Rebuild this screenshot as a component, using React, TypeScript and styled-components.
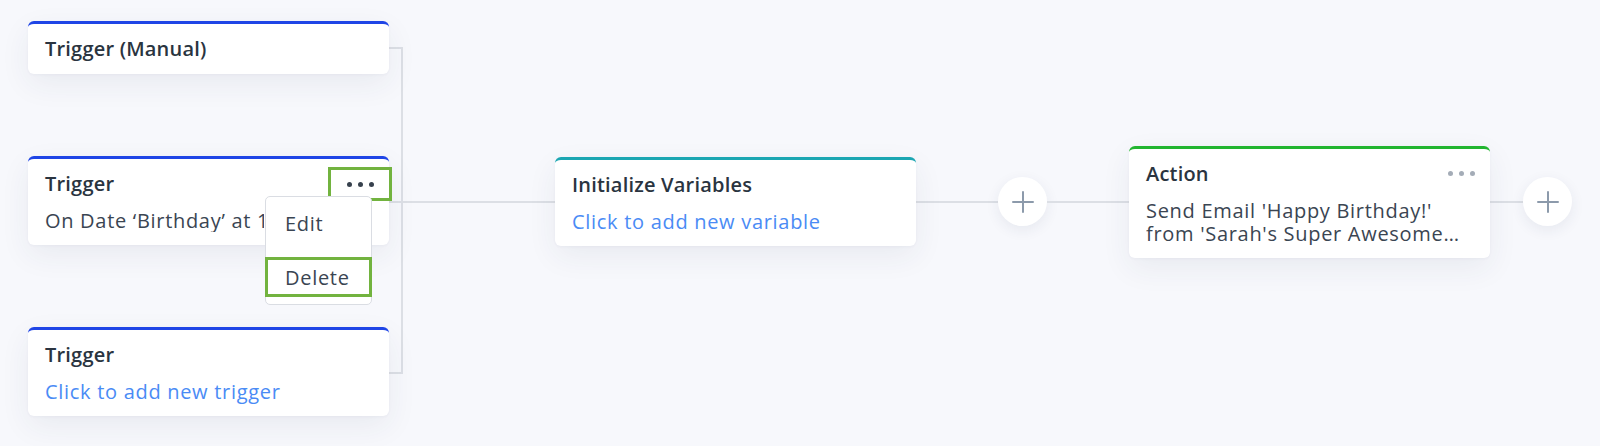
import React from 'react';
import styled, { createGlobalStyle } from 'styled-components';

const GlobalStyle = createGlobalStyle`
  html, body {
    margin: 0;
    padding: 0;
    background: #f7f8fc;
  }
  body {
    font-family: 'Open Sans', 'Liberation Sans', sans-serif;
    -webkit-font-smoothing: antialiased;
  }
`;

const Canvas = styled.div`
  display: flex;
  align-items: flex-start;
  height: 446px;
  box-sizing: border-box;
  padding: 21px 0 0 28px;
  background: #f7f8fc;
  overflow: hidden;
`;

const TriggerColumn = styled.div`
  display: flex;
  flex-direction: column;
  gap: 82px;
`;

const Bracket = styled.div`
  width: 12px;
  height: 323px;
  margin-top: 26px;
  border: 2px solid #dcdfe5;
  border-left: none;
  flex-shrink: 0;
`;

const Flow = styled.div`
  display: flex;
  align-items: center;
  height: 111px;
  margin-top: 125px;
  margin-left: -14px;
`;

const Connector = styled.div<{ $width: number }>`
  width: ${({ $width }) => $width}px;
  height: 2px;
  background: #dcdfe5;
  flex-shrink: 0;
`;

const Card = styled.div<{ $accent: string }>`
  position: relative;
  width: 361px;
  box-sizing: border-box;
  padding: 13px 17px 13px;
  background: #ffffff;
  border-top: 3px solid ${({ $accent }) => $accent};
  border-radius: 6px;
  box-shadow: 0 10px 30px rgba(40, 52, 90, 0.07), 0 1px 3px rgba(40, 52, 90, 0.04);
  flex-shrink: 0;
`;

const CardHeader = styled.div`
  display: flex;
  align-items: center;
  justify-content: space-between;
`;

const CardTitle = styled.div`
  font-size: 20px;
  line-height: 24px;
  font-weight: 600;
  letter-spacing: 0.2px;
  color: #2a3440;
  white-space: nowrap;
`;

const CardBody = styled.div<{ $lines?: number; $clipWidth?: number }>`
  margin-top: 13px;
  font-size: 20px;
  line-height: 23px;
  letter-spacing: 0.7px;
  color: #3a4552;
  overflow: hidden;
  display: -webkit-box;
  -webkit-box-orient: vertical;
  -webkit-line-clamp: ${({ $lines }) => $lines || 1};
  word-break: break-word;
  ${({ $clipWidth }) => ($clipWidth ? `max-width: ${$clipWidth}px; white-space: nowrap; display: block;` : '')}
`;

const CardLink = styled.div`
  margin-top: 13px;
  font-size: 20px;
  line-height: 23px;
  letter-spacing: 0.7px;
  color: #4a8bf5;
  cursor: pointer;
`;

const DotsButton = styled.button<{ $dark?: boolean; $highlight?: boolean }>`
  display: flex;
  align-items: center;
  justify-content: center;
  gap: 6px;
  width: 58px;
  height: 28px;
  margin: -2px -17px -2px 0;
  padding: 0;
  background: none;
  border: none;
  cursor: pointer;
  outline: ${({ $highlight }) => ($highlight ? '3px solid #72b33f' : 'none')};

  span {
    width: 5px;
    height: 5px;
    border-radius: 50%;
    background: ${({ $dark }) => ($dark ? '#37414d' : '#a4acb7')};
  }
`;

const Menu = styled.div`
  position: absolute;
  left: 237px;
  top: 37px;
  width: 107px;
  box-sizing: border-box;
  padding: 6px 0 7px;
  display: flex;
  flex-direction: column;
  gap: 14px;
  background: #ffffff;
  border: 1px solid #dadde3;
  border-radius: 5px;
  z-index: 2;
`;

const MenuItem = styled.div<{ $highlight?: boolean }>`
  height: 40px;
  display: flex;
  align-items: center;
  padding-left: 20px;
  margin: 0 -1px;
  font-size: 20px;
  letter-spacing: 0.7px;
  color: #3a4552;
  cursor: pointer;
  box-shadow: ${({ $highlight }) => ($highlight ? 'inset 0 0 0 3px #72b33f' : 'none')};
`;

const PlusButton = styled.button`
  width: 49px;
  height: 49px;
  border-radius: 50%;
  border: none;
  padding: 0;
  background: #ffffff;
  box-shadow: 0 4px 14px rgba(40, 52, 90, 0.08);
  display: flex;
  align-items: center;
  justify-content: center;
  flex-shrink: 0;
  cursor: pointer;
`;

const Dots: React.FC<{ dark?: boolean; highlight?: boolean }> = ({ dark, highlight }) => (
  <DotsButton $dark={dark} $highlight={highlight}>
    <span />
    <span />
    <span />
  </DotsButton>
);

const PlusIcon = () => (
  <svg width="22" height="22" viewBox="0 0 22 22">
    <path d="M11 1v20M1 11h20" stroke="#8c9aab" strokeWidth="2" strokeLinecap="round" />
  </svg>
);

const App: React.FC = () => {
  return (
    <>
      <GlobalStyle />
      <Canvas>
        <TriggerColumn>
          <Card $accent="#1f45e6">
            <CardTitle>Trigger (Manual)</CardTitle>
          </Card>

          <Card $accent="#1f45e6">
            <CardHeader>
              <CardTitle>Trigger</CardTitle>
              <Dots dark highlight />
            </CardHeader>
            {/* the open menu hides the rest of this line */}
            <CardBody $clipWidth={219}>On Date ‘Birthday’ at 10:00 AM</CardBody>
            <Menu>
              <MenuItem>Edit</MenuItem>
              <MenuItem $highlight>Delete</MenuItem>
            </Menu>
          </Card>

          <Card $accent="#1f45e6">
            <CardTitle>Trigger</CardTitle>
            <CardLink>Click to add new trigger</CardLink>
          </Card>
        </TriggerColumn>

        <Bracket />

        <Flow>
          <Connector $width={166} />
          <Card $accent="#1ba6b2">
            <CardTitle>Initialize Variables</CardTitle>
            <CardLink>Click to add new variable</CardLink>
          </Card>
          <Connector $width={82} />
          <PlusButton>
            <PlusIcon />
          </PlusButton>
          <Connector $width={82} />
          <Card $accent="#22b530">
            <CardHeader>
              <CardTitle>Action</CardTitle>
              <Dots />
            </CardHeader>
            <CardBody $lines={2}>
              Send Email 'Happy Birthday!' from 'Sarah's Super Awesome Birthday Club'
            </CardBody>
          </Card>
          <Connector $width={33} />
          <PlusButton>
            <PlusIcon />
          </PlusButton>
        </Flow>
      </Canvas>
    </>
  );
};

export default App;
